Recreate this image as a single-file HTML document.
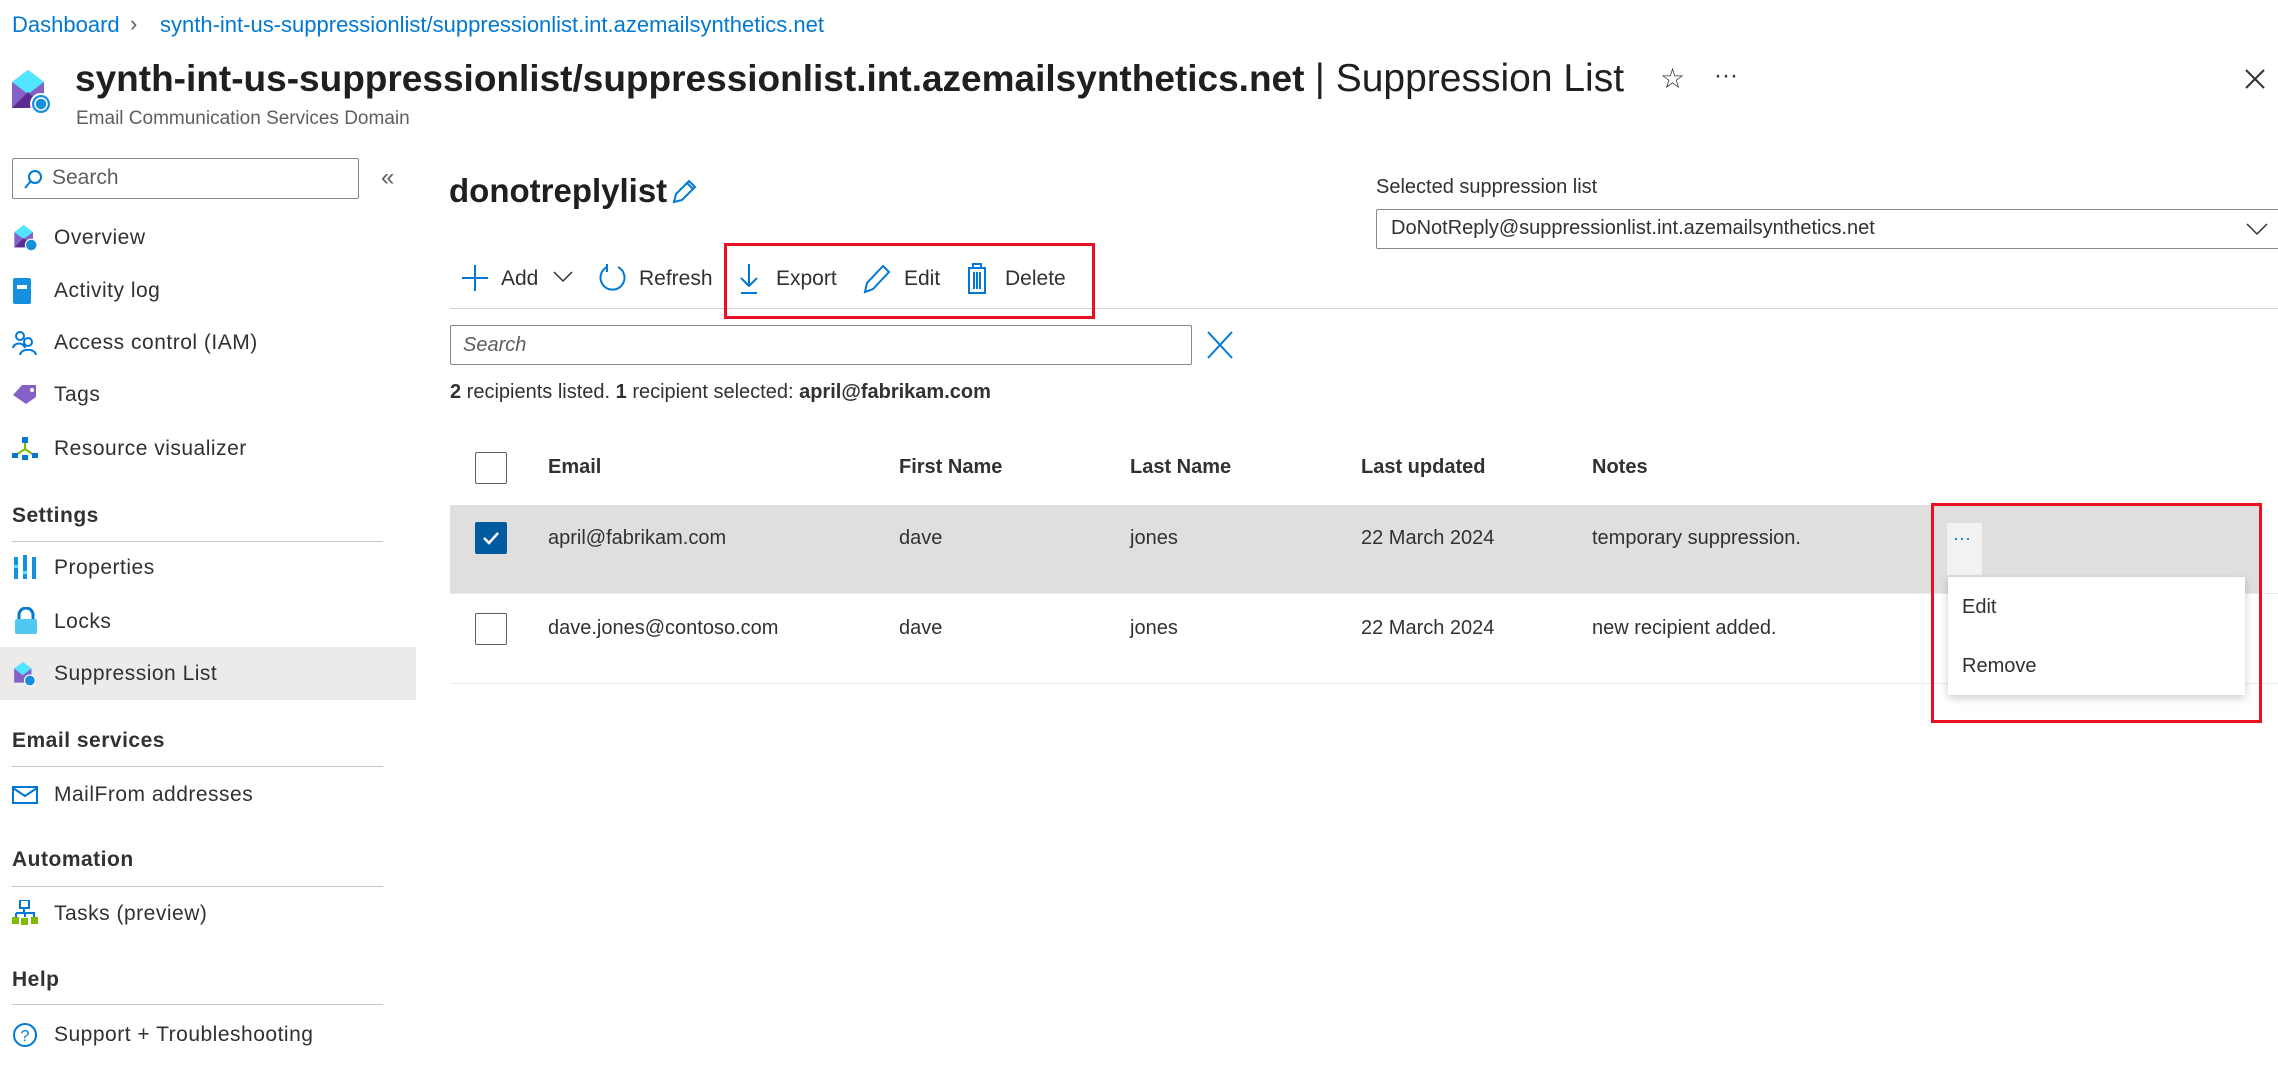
<!DOCTYPE html>
<html><head><meta charset="utf-8"><style>
*{margin:0;padding:0;box-sizing:border-box}
body{width:2278px;height:1084px;background:#fff;font-family:"Liberation Sans",sans-serif;color:#323130;position:relative;overflow:hidden}
.a{position:absolute;white-space:nowrap}
.bl{color:#0078d4}
.nav{font-size:21px;color:#323130;letter-spacing:.5px}
.sec{font-size:21px;font-weight:bold;color:#323130;letter-spacing:.5px}
.hr{position:absolute;height:1px;background:#c8c6c4}
.t{font-size:20px;color:#323130}
.th{font-size:20px;font-weight:bold;color:#323130}
.cb{position:absolute;width:32px;height:32px;border:1.5px solid #605e5c;border-radius:2px;background:#fff}
.red{position:absolute;border:3px solid #e81123}
</style></head><body>
<div class="a bl" style="left:12px;top:12px;font-size:22px">Dashboard</div>
<div class="a" style="left:130px;top:11px;font-size:22px;color:#605e5c">›</div>
<div class="a bl" style="left:160px;top:12px;font-size:22px">synth-int-us-suppressionlist/suppressionlist.int.azemailsynthetics.net</div>

<svg class="a" style="left:10px;top:68px" width="44" height="48" viewBox="0 0 44 48"><path d="M2 14 L18 2 L34 14 L34 40 L2 40Z" fill="#8661c5"/><path d="M2 14 L18 2 L34 14 L18 26Z" fill="#50e6ff"/><path d="M2 40 L18 24 L34 40Z" fill="#5c2d91"/><circle cx="31" cy="36" r="10" fill="#1490df" stroke="#fff" stroke-width="2"/><circle cx="31" cy="36" r="6" fill="none" stroke="#fff" stroke-width="1.5"/></svg>
<div class="a" style="left:75px;top:57px;font-size:37px;font-weight:bold;color:#201f1e;letter-spacing:0">synth-int-us-suppressionlist/suppressionlist.int.azemailsynthetics.net <span style="font-weight:normal;font-size:39px">| Suppression List</span></div>
<div class="a" style="left:76px;top:108px;font-size:19px;color:#605e5c">Email Communication Services Domain</div>
<div class="a" style="left:1660px;top:62px;font-size:28px;color:#323130">☆</div>
<div class="a" style="left:1714px;top:62px;font-size:24px;color:#323130">···</div>
<svg class="a" style="left:2244px;top:68px" width="22" height="22"><path d="M2 2L20 20M20 2L2 20" stroke="#323130" stroke-width="2"/></svg>

<!-- sidebar -->
<div class="a" style="left:12px;top:158px;width:347px;height:41px;border:1.5px solid #8a8886;border-radius:2px"></div>
<svg class="a" style="left:22px;top:168px" width="22" height="22"><circle cx="13" cy="9" r="6" fill="none" stroke="#0078d4" stroke-width="2"/><path d="M9 13L3 20" stroke="#0078d4" stroke-width="2"/></svg>
<div class="a" style="left:52px;top:166px;font-size:21px;color:#605e5c">Search</div>
<div class="a" style="left:381px;top:164px;font-size:24px;color:#605e5c">«</div>

<svg class="a" style="left:12px;top:224px" width="28" height="28" viewBox="0 0 44 48"><path d="M2 14 L18 2 L34 14 L34 40 L2 40Z" fill="#8661c5"/><path d="M2 14 L18 2 L34 14 L18 26Z" fill="#50e6ff"/><path d="M2 40 L18 24 L34 40Z" fill="#5c2d91"/><circle cx="31" cy="36" r="10" fill="#1490df" stroke="#fff" stroke-width="2"/></svg>
<div class="a nav" style="left:54px;top:226px">Overview</div>
<svg class="a" style="left:12px;top:277px" width="22" height="28"><rect x="1" y="1" width="18" height="26" rx="2" fill="#1490df"/><rect x="5" y="8" width="10" height="4" fill="#fff"/></svg>
<div class="a nav" style="left:54px;top:279px">Activity log</div>
<svg class="a" style="left:12px;top:330px" width="26" height="26"><circle cx="8" cy="6" r="4" fill="none" stroke="#0078d4" stroke-width="2"/><circle cx="16" cy="12" r="4" fill="none" stroke="#0078d4" stroke-width="2"/><path d="M1 18c1-6 11-6 12 0M8 25c1-7 15-7 16 0" fill="none" stroke="#0078d4" stroke-width="2"/></svg>
<div class="a nav" style="left:54px;top:331px">Access control (IAM)</div>
<svg class="a" style="left:12px;top:383px" width="26" height="22"><path d="M1 12L10 2H24V14L14 21Z" fill="#8661c5"/><circle cx="20" cy="7" r="2" fill="#fff"/></svg>
<div class="a nav" style="left:54px;top:383px">Tags</div>
<svg class="a" style="left:12px;top:437px" width="26" height="24"><rect x="10" y="0" width="6" height="6" fill="#0078d4"/><path d="M13 6V12M4 18L13 12L22 18" stroke="#7fba00" stroke-width="2" fill="none"/><rect x="0" y="16" width="6" height="5" fill="#0078d4"/><rect x="10" y="18" width="6" height="5" fill="#0078d4"/><rect x="20" y="16" width="6" height="5" fill="#0078d4"/></svg>
<div class="a nav" style="left:54px;top:437px">Resource visualizer</div>

<div class="a sec" style="left:12px;top:504px">Settings</div>
<div class="hr" style="left:12px;top:541px;width:371px"></div>
<svg class="a" style="left:14px;top:555px" width="22" height="26"><rect x="0" y="2" width="4" height="22" fill="#1490df"/><rect x="9" y="0" width="4" height="24" fill="#1490df"/><rect x="18" y="2" width="4" height="22" fill="#1490df"/><rect x="0" y="10" width="4" height="3" fill="#50e6ff"/><rect x="9" y="16" width="4" height="3" fill="#50e6ff"/></svg>
<div class="a nav" style="left:54px;top:556px">Properties</div>
<svg class="a" style="left:14px;top:607px" width="24" height="28"><path d="M5 12V8a7 7 0 0 1 14 0v4" fill="none" stroke="#0078d4" stroke-width="3"/><rect x="1" y="12" width="22" height="15" rx="2" fill="#50c8f0"/></svg>
<div class="a nav" style="left:54px;top:610px">Locks</div>
<div class="a" style="left:0;top:647px;width:416px;height:53px;background:#edebe9"></div>
<svg class="a" style="left:12px;top:661px" width="26" height="26" viewBox="0 0 44 48"><path d="M2 14 L18 2 L34 14 L34 40 L2 40Z" fill="#8661c5"/><path d="M2 14 L18 2 L34 14 L18 26Z" fill="#50e6ff"/><circle cx="31" cy="36" r="10" fill="#1490df" stroke="#fff" stroke-width="2"/></svg>
<div class="a nav" style="left:54px;top:662px">Suppression List</div>

<div class="a sec" style="left:12px;top:729px">Email services</div>
<div class="hr" style="left:12px;top:766px;width:371px"></div>
<svg class="a" style="left:12px;top:785px" width="26" height="20"><rect x="1" y="2" width="24" height="16" fill="none" stroke="#0078d4" stroke-width="2"/><path d="M1 3L13 11L25 3" fill="none" stroke="#0078d4" stroke-width="2"/></svg>
<div class="a nav" style="left:54px;top:783px">MailFrom addresses</div>

<div class="a sec" style="left:12px;top:848px">Automation</div>
<div class="hr" style="left:12px;top:886px;width:371px"></div>
<svg class="a" style="left:12px;top:900px" width="26" height="26"><rect x="8" y="0" width="9" height="8" fill="none" stroke="#0078d4" stroke-width="2"/><path d="M12 8V13M4 13H22V17M4 13V17M13 13V17" stroke="#0078d4" stroke-width="2" fill="none"/><rect x="0" y="17" width="7" height="7" fill="#7fba00"/><rect x="9" y="18" width="7" height="7" fill="#7fba00"/><rect x="19" y="17" width="7" height="7" fill="#7fba00"/></svg>
<div class="a nav" style="left:54px;top:902px">Tasks (preview)</div>

<div class="a sec" style="left:12px;top:968px">Help</div>
<div class="hr" style="left:12px;top:1004px;width:371px"></div>
<svg class="a" style="left:12px;top:1022px" width="26" height="26"><circle cx="13" cy="13" r="11" fill="none" stroke="#0078d4" stroke-width="2"/><text x="13" y="19" text-anchor="middle" font-size="16" fill="#0078d4" font-family="Liberation Sans">?</text></svg>
<div class="a nav" style="left:54px;top:1023px">Support + Troubleshooting</div>

<!-- main -->
<div class="a" style="left:449px;top:172px;font-size:33px;font-weight:bold;color:#201f1e">donotreplylist</div>
<svg class="a" style="left:670px;top:178px" width="28" height="28"><path d="M4 24L6 16L19 3L25 9L12 22Z M17 5L23 11" fill="none" stroke="#0078d4" stroke-width="2"/></svg>
<div class="a" style="left:1376px;top:176px;font-size:20px;color:#323130">Selected suppression list</div>
<div class="a" style="left:1376px;top:209px;width:910px;height:40px;border:1.5px solid #8a8886;border-radius:2px"></div>
<div class="a" style="left:1391px;top:217px;font-size:20px;color:#323130">DoNotReply@suppressionlist.int.azemailsynthetics.net</div>
<svg class="a" style="left:2246px;top:222px" width="22" height="14"><path d="M1 2L11 12L21 2" fill="none" stroke="#323130" stroke-width="1.5"/></svg>

<svg class="a" style="left:461px;top:264px" width="28" height="28"><path d="M14 1V27M1 14H27" stroke="#0078d4" stroke-width="2"/></svg>
<div class="a" style="left:501px;top:267px;font-size:21px">Add</div>
<svg class="a" style="left:553px;top:271px" width="20" height="12"><path d="M1 1L10 10L19 1" fill="none" stroke="#323130" stroke-width="1.5"/></svg>
<svg class="a" style="left:598px;top:263px" width="30" height="32"><path d="M9 4A12 12 0 1 0 20 4" fill="none" stroke="#0078d4" stroke-width="2"/><path d="M9 1V9" stroke="#0078d4" stroke-width="2"/></svg>
<div class="a" style="left:639px;top:267px;font-size:21px">Refresh</div>
<svg class="a" style="left:738px;top:263px" width="22" height="32"><path d="M11 1V23M3 15L11 23L19 15M3 30H19" fill="none" stroke="#0078d4" stroke-width="2"/></svg>
<div class="a" style="left:776px;top:267px;font-size:21px">Export</div>
<svg class="a" style="left:862px;top:263px" width="30" height="32"><path d="M3 29L5 20L21 3L27 9L11 26Z" fill="none" stroke="#0078d4" stroke-width="2"/></svg>
<div class="a" style="left:904px;top:267px;font-size:21px">Edit</div>
<svg class="a" style="left:965px;top:261px" width="24" height="34"><path d="M3 7H21M8 7V3H16V7M4 7V32H20V7M9 11V28M12 11V28M15 11V28" fill="none" stroke="#0078d4" stroke-width="2"/></svg>
<div class="a" style="left:1005px;top:267px;font-size:21px">Delete</div>
<div class="hr" style="left:450px;top:308px;width:1828px;background:#d2d0ce"></div>
<div class="red" style="left:724px;top:243px;width:371px;height:76px"></div>

<div class="a" style="left:450px;top:325px;width:742px;height:40px;border:1.5px solid #8a8886;border-radius:2px"></div>
<div class="a" style="left:463px;top:334px;font-size:20px;font-style:italic;color:#605e5c">Search</div>
<svg class="a" style="left:1206px;top:330px" width="28" height="30"><path d="M2 2L26 28M26 2L2 28" stroke="#0078d4" stroke-width="2"/></svg>
<div class="a" style="left:450px;top:381px;font-size:20px"><b>2</b> recipients listed. <b>1</b> recipient selected: <b>april@fabrikam.com</b></div>

<div class="cb" style="left:475px;top:452px"></div>
<div class="a th" style="left:548px;top:456px">Email</div>
<div class="a th" style="left:899px;top:456px">First Name</div>
<div class="a th" style="left:1130px;top:456px">Last Name</div>
<div class="a th" style="left:1361px;top:456px">Last updated</div>
<div class="a th" style="left:1592px;top:456px">Notes</div>

<div class="a" style="left:450px;top:505px;width:1810px;height:88px;background:#e1dfdd"></div>
<div class="a" style="left:475px;top:522px;width:32px;height:32px;background:#005a9e;border-radius:2px"></div>
<svg class="a" style="left:481px;top:530px" width="20" height="16"><path d="M3 8L8 13L17 3" fill="none" stroke="#fff" stroke-width="2.5"/></svg>
<div class="a t" style="left:548px;top:527px">april@fabrikam.com</div>
<div class="a t" style="left:899px;top:527px">dave</div>
<div class="a t" style="left:1130px;top:527px">jones</div>
<div class="a t" style="left:1361px;top:527px">22 March 2024</div>
<div class="a t" style="left:1592px;top:527px">temporary suppression.</div>
<div class="a" style="left:1947px;top:523px;width:35px;height:52px;background:#f3f2f1"></div>
<div class="a" style="left:1953px;top:528px;font-size:18px;color:#0078d4">···</div>

<div class="hr" style="left:450px;top:593px;width:1828px;background:#edebe9"></div>
<div class="cb" style="left:475px;top:613px"></div>
<div class="a t" style="left:548px;top:617px">dave.jones@contoso.com</div>
<div class="a t" style="left:899px;top:617px">dave</div>
<div class="a t" style="left:1130px;top:617px">jones</div>
<div class="a t" style="left:1361px;top:617px">22 March 2024</div>
<div class="a t" style="left:1592px;top:617px">new recipient added.</div>
<div class="hr" style="left:450px;top:683px;width:1828px;background:#edebe9"></div>

<div class="a" style="left:1948px;top:577px;width:297px;height:118px;background:#fff;box-shadow:0 3px 8px rgba(0,0,0,.2)"></div>
<div class="a t" style="left:1962px;top:596px">Edit</div>
<div class="a t" style="left:1962px;top:655px">Remove</div>
<div class="red" style="left:1931px;top:503px;width:331px;height:220px"></div>
</body></html>
